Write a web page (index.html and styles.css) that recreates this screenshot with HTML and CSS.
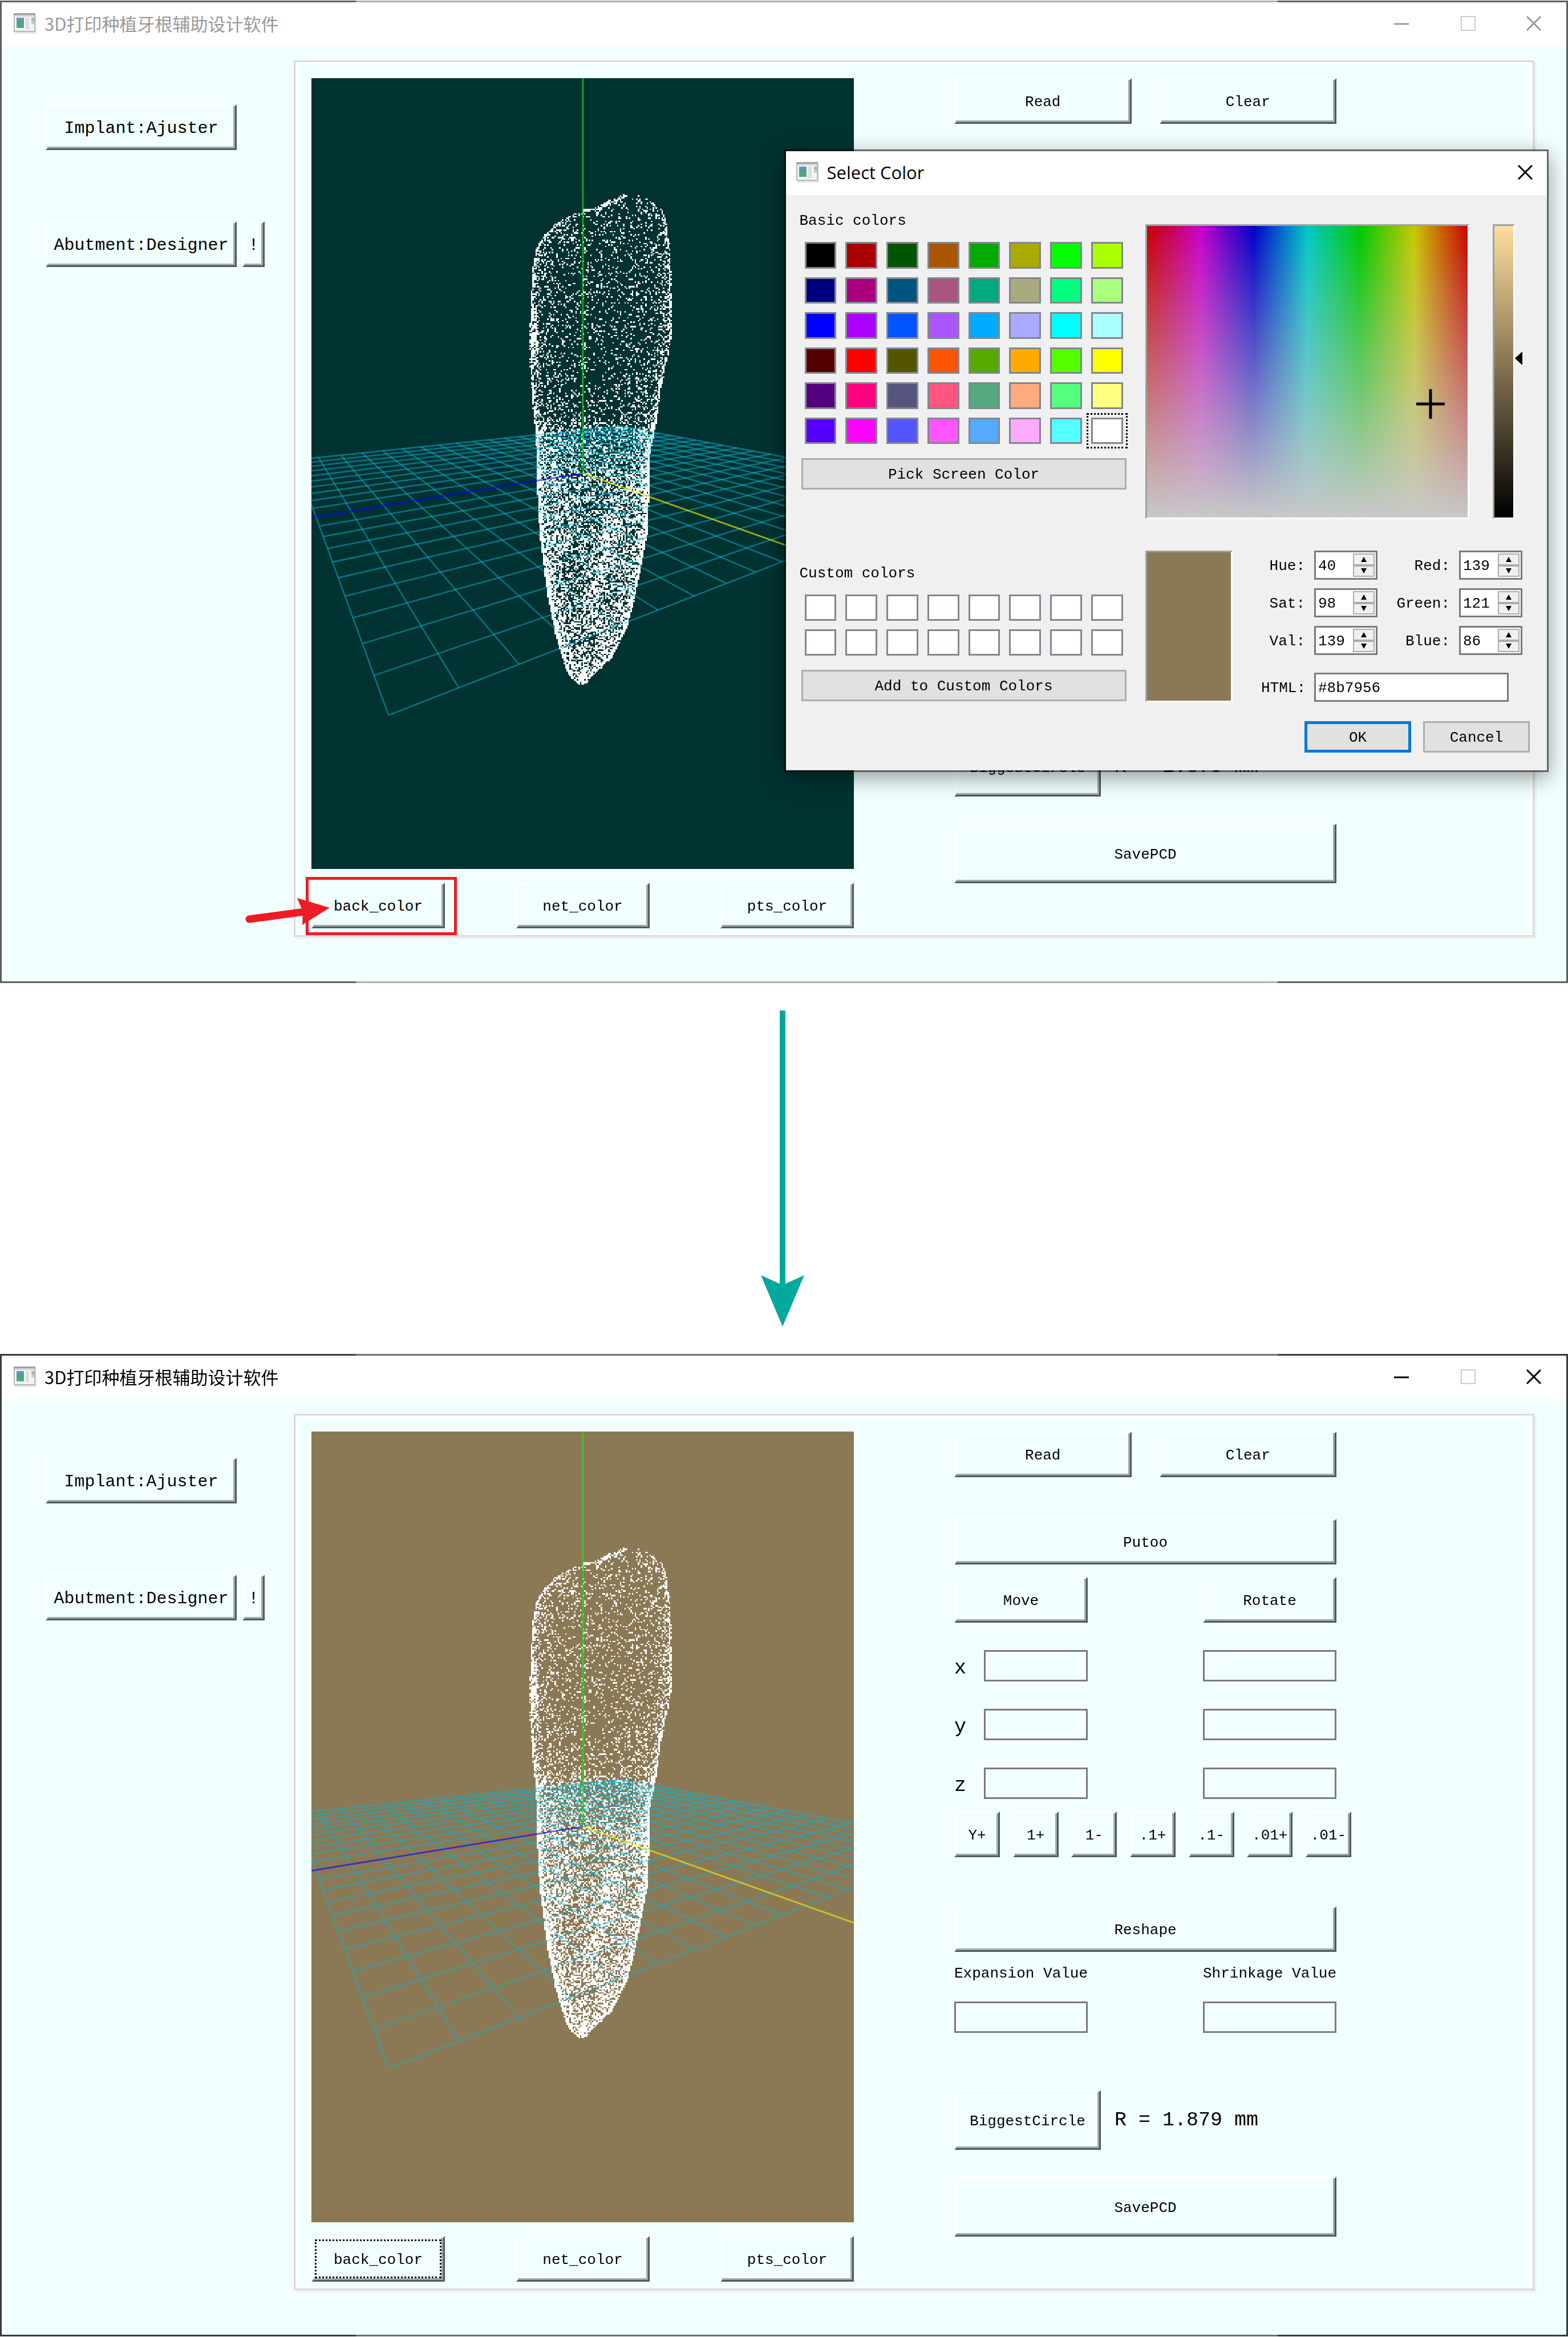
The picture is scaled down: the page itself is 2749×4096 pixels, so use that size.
FILE: index.html
```html
<!DOCTYPE html>
<html lang="zh-CN">
<head>
<meta charset="utf-8">
<title>3D打印种植牙根辅助设计软件</title>
<link rel="stylesheet" href="styles.css">
</head>
<body>
<svg class="defs" aria-hidden="true">
  <symbol id="app-icon" viewBox="0 0 40 36">
    <rect x="2" y="3" width="38" height="33" fill="#e6e6e6"/>
    <rect x="1" y="1" width="36" height="31" fill="#f4f4f4" stroke="#b4b8bc" stroke-width="2"/>
    <rect x="0" y="0" width="38" height="3" fill="#9ea0a4"/>
    <rect x="2" y="3" width="34" height="3" fill="#cdd2da"/>
    <rect x="5" y="8" width="13" height="6" fill="#6b93b8"/>
    <rect x="5" y="13" width="13" height="7" fill="#559c96"/>
    <rect x="5" y="19" width="13" height="7" fill="#50a878"/>
    <rect x="21" y="8" width="6" height="20" fill="#dedede"/>
    <rect x="31" y="8" width="5" height="5" fill="#9db8d0"/>
    <rect x="31" y="13" width="5" height="6" fill="#b4d8b8"/>
  </symbol>
  <symbol id="close" viewBox="0 0 26 26"><path d="M1 1 25 25M25 1 1 25" stroke="currentColor" stroke-width="3"/></symbol>
  <symbol id="maximize" viewBox="0 0 26 26"><rect x="1" y="1" width="24" height="24" fill="none" stroke="currentColor" stroke-width="2"/></symbol>
  <symbol id="minimize" viewBox="0 0 26 26"><path d="M0 14H26" stroke="currentColor" stroke-width="3"/></symbol>
</svg>

<main class="page">
  <section class="window inactive">
    <header class="titlebar">
      <svg class="app-icon"><use href="#app-icon"/></svg>
      <h1 class="title">3D打印种植牙根辅助设计软件</h1>
      <button class="caption" aria-label="Minimize"><svg><use href="#minimize"/></svg></button>
      <button class="caption" aria-label="Maximize" disabled><svg><use href="#maximize"/></svg></button>
      <button class="caption" aria-label="Close"><svg><use href="#close"/></svg></button>
    </header>
    <div class="body">
      <nav class="sidebar">
        <button class="btn nav">Implant:Ajuster</button>
        <div class="nav-row"><button class="btn nav">Abutment:Designer</button><button class="btn nav mark">!</button></div>
      </nav>
      <div class="panel">
        <div class="view">
          <canvas class="scene dark" width="951" height="1386"></canvas>
          <div class="view-buttons">
            <div class="callout">
              <button class="btn">back_color</button>
              <span class="callout-box"></span>
              <svg class="callout-arrow" viewBox="0 0 155 60"><path d="M11 44 108 31" stroke="#ed1c24" stroke-width="13" stroke-linecap="round"/><path d="M152 24 95 7 105 31 104 54Z" fill="#ed1c24"/></svg>
            </div>
            <button class="btn">net_color</button>
            <button class="btn">pts_color</button>
          </div>
        </div>
        <div class="controls">
          <div class="pair"><button class="btn">Read</button><button class="btn">Clear</button></div>
          <button class="btn wide putoo">Putoo</button>
          <div class="row ends"><button class="btn">Move</button><button class="btn">Rotate</button></div>
          <div class="row axis"><label for="ax">x</label><input class="field" id="ax"><input class="field" aria-label="x rotation"></div>
          <div class="row axis"><label for="ay">y</label><input class="field" id="ay"><input class="field" aria-label="y rotation"></div>
          <div class="row axis"><label for="az">z</label><input class="field" id="az"><input class="field" aria-label="z rotation"></div>
          <div class="steps"><button class="btn">Y+</button><button class="btn">1+</button><button class="btn">1-</button><button class="btn">.1+</button><button class="btn">.1-</button><button class="btn">.01+</button><button class="btn">.01-</button></div>
          <button class="btn wide reshape">Reshape</button>
          <div class="row values">
            <div class="value"><label for="ae">Expansion Value</label><input class="field" id="ae"></div>
            <div class="value"><label for="as">Shrinkage Value</label><input class="field" id="as"></div>
          </div>
          <div class="circle"><button class="btn">BiggestCircle</button><output>R = 1.879 mm</output></div>
          <button class="btn wide save">SavePCD</button>
        </div>
      </div>
    </div>
  </section>

  <section class="dialog" role="dialog" aria-label="Select Color">
    <header class="titlebar">
      <svg class="app-icon"><use href="#app-icon"/></svg>
      <h2 class="title">Select Color</h2>
      <button class="caption" aria-label="Close"><svg><use href="#close"/></svg></button>
    </header>
    <div class="dialog-body">
      <div class="palette">
        <h3 class="label">Basic colors</h3>
        <div class="swatches basic">
          <button class="swatch" style="background:#000000"></button><button class="swatch" style="background:#aa0000"></button><button class="swatch" style="background:#005500"></button><button class="swatch" style="background:#aa5500"></button><button class="swatch" style="background:#00aa00"></button><button class="swatch" style="background:#aaaa00"></button><button class="swatch" style="background:#00ff00"></button><button class="swatch" style="background:#aaff00"></button>
          <button class="swatch" style="background:#00007f"></button><button class="swatch" style="background:#aa007f"></button><button class="swatch" style="background:#00557f"></button><button class="swatch" style="background:#aa557f"></button><button class="swatch" style="background:#00aa7f"></button><button class="swatch" style="background:#aaaa7f"></button><button class="swatch" style="background:#00ff7f"></button><button class="swatch" style="background:#aaff7f"></button>
          <button class="swatch" style="background:#0000ff"></button><button class="swatch" style="background:#aa00ff"></button><button class="swatch" style="background:#0055ff"></button><button class="swatch" style="background:#aa55ff"></button><button class="swatch" style="background:#00aaff"></button><button class="swatch" style="background:#aaaaff"></button><button class="swatch" style="background:#00ffff"></button><button class="swatch" style="background:#aaffff"></button>
          <button class="swatch" style="background:#550000"></button><button class="swatch" style="background:#ff0000"></button><button class="swatch" style="background:#555500"></button><button class="swatch" style="background:#ff5500"></button><button class="swatch" style="background:#55aa00"></button><button class="swatch" style="background:#ffaa00"></button><button class="swatch" style="background:#55ff00"></button><button class="swatch" style="background:#ffff00"></button>
          <button class="swatch" style="background:#55007f"></button><button class="swatch" style="background:#ff007f"></button><button class="swatch" style="background:#55557f"></button><button class="swatch" style="background:#ff557f"></button><button class="swatch" style="background:#55aa7f"></button><button class="swatch" style="background:#ffaa7f"></button><button class="swatch" style="background:#55ff7f"></button><button class="swatch" style="background:#ffff7f"></button>
          <button class="swatch" style="background:#5500ff"></button><button class="swatch" style="background:#ff00ff"></button><button class="swatch" style="background:#5555ff"></button><button class="swatch" style="background:#ff55ff"></button><button class="swatch" style="background:#55aaff"></button><button class="swatch" style="background:#ffaaff"></button><button class="swatch" style="background:#55ffff"></button><button class="swatch selected" style="background:#ffffff"></button>
        </div>
        <button class="flat">Pick Screen Color</button>
        <h3 class="label custom">Custom colors</h3>
        <div class="swatches">
          <button class="swatch"></button><button class="swatch"></button><button class="swatch"></button><button class="swatch"></button><button class="swatch"></button><button class="swatch"></button><button class="swatch"></button><button class="swatch"></button>
          <button class="swatch"></button><button class="swatch"></button><button class="swatch"></button><button class="swatch"></button><button class="swatch"></button><button class="swatch"></button><button class="swatch"></button><button class="swatch"></button>
        </div>
        <button class="flat">Add to Custom Colors</button>
      </div>
      <div class="picker">
        <div class="spectrum">
          <div class="hues"><svg class="cross" viewBox="0 0 50 52"><path d="M0 26H50M25 0V52" stroke="#000" stroke-width="5"/></svg></div>
          <div class="luma"><svg class="thumb" viewBox="0 0 13 24"><path d="M0 12 13 0V24Z"/></svg></div>
        </div>
        <div class="numbers">
          <div class="preview"></div>
          <div class="form">
            <label for="hue">Hue:</label><span class="spin"><input type="number" id="hue" value="40"><button class="up" aria-label="Up"></button><button class="down" aria-label="Down"></button></span>
            <label for="red">Red:</label><span class="spin"><input type="number" id="red" value="139"><button class="up" aria-label="Up"></button><button class="down" aria-label="Down"></button></span>
            <label for="sat">Sat:</label><span class="spin"><input type="number" id="sat" value="98"><button class="up" aria-label="Up"></button><button class="down" aria-label="Down"></button></span>
            <label for="green">Green:</label><span class="spin"><input type="number" id="green" value="121"><button class="up" aria-label="Up"></button><button class="down" aria-label="Down"></button></span>
            <label for="val">Val:</label><span class="spin"><input type="number" id="val" value="139"><button class="up" aria-label="Up"></button><button class="down" aria-label="Down"></button></span>
            <label for="blue">Blue:</label><span class="spin"><input type="number" id="blue" value="86"><button class="up" aria-label="Up"></button><button class="down" aria-label="Down"></button></span>
            <label class="last" for="html">HTML:</label><input class="hex last" id="html" value="#8b7956">
          </div>
        </div>
        <div class="actions"><button class="flat primary">OK</button><button class="flat">Cancel</button></div>
      </div>
    </div>
  </section>

  <div class="flow">
    <svg viewBox="0 0 82 554"><path d="M33 0H43V479L76 464 38 554 0 464 33 479Z" fill="#00a99d"/></svg>
  </div>

  <section class="window active">
    <header class="titlebar">
      <svg class="app-icon"><use href="#app-icon"/></svg>
      <h1 class="title">3D打印种植牙根辅助设计软件</h1>
      <button class="caption" aria-label="Minimize"><svg><use href="#minimize"/></svg></button>
      <button class="caption" aria-label="Maximize" disabled><svg><use href="#maximize"/></svg></button>
      <button class="caption" aria-label="Close"><svg><use href="#close"/></svg></button>
    </header>
    <div class="body">
      <nav class="sidebar">
        <button class="btn nav">Implant:Ajuster</button>
        <div class="nav-row"><button class="btn nav">Abutment:Designer</button><button class="btn nav mark">!</button></div>
      </nav>
      <div class="panel">
        <div class="view">
          <canvas class="scene tan" width="951" height="1386"></canvas>
          <div class="view-buttons">
            <button class="btn focused">back_color</button>
            <button class="btn">net_color</button>
            <button class="btn">pts_color</button>
          </div>
        </div>
        <div class="controls">
          <div class="pair"><button class="btn">Read</button><button class="btn">Clear</button></div>
          <button class="btn wide putoo">Putoo</button>
          <div class="row ends"><button class="btn">Move</button><button class="btn">Rotate</button></div>
          <div class="row axis"><label for="bx">x</label><input class="field" id="bx"><input class="field" aria-label="x rotation"></div>
          <div class="row axis"><label for="by">y</label><input class="field" id="by"><input class="field" aria-label="y rotation"></div>
          <div class="row axis"><label for="bz">z</label><input class="field" id="bz"><input class="field" aria-label="z rotation"></div>
          <div class="steps"><button class="btn">Y+</button><button class="btn">1+</button><button class="btn">1-</button><button class="btn">.1+</button><button class="btn">.1-</button><button class="btn">.01+</button><button class="btn">.01-</button></div>
          <button class="btn wide reshape">Reshape</button>
          <div class="row values">
            <div class="value"><label for="be">Expansion Value</label><input class="field" id="be"></div>
            <div class="value"><label for="bs">Shrinkage Value</label><input class="field" id="bs"></div>
          </div>
          <div class="circle"><button class="btn">BiggestCircle</button><output>R = 1.879 mm</output></div>
          <button class="btn wide save">SavePCD</button>
        </div>
      </div>
    </div>
  </section>
</main>
<script src="scene.js"></script>
</body>
</html>
```
FILE: styles.css
```css
* { box-sizing: border-box; }

body {
  margin: 0;
  background: #fff;
  color: #000;
  font: 26px/32px "Liberation Mono", "Noto Sans CJK SC", monospace;
}

button, input { font: inherit; color: inherit; border-radius: 0; margin: 0; padding: 0; }
.defs { display: none; }

.page {
  position: relative;
  display: flex;
  flex-direction: column;
  padding: 1px 0 2px 0;
}

/* main windows */
.window { border: 3px solid; background: #f2ffff; }
.inactive { border-image: linear-gradient(to right, #5b605e 22.7%, #a9b0ad 22.7% 81.5%, #5b605e 81.5%) 3; }
.active { border-image: linear-gradient(to right, #3b3b3b 22.7%, #6f6f6f 22.7% 81.5%, #3b3b3b 81.5%) 3; }

.titlebar {
  display: flex;
  align-items: center;
  height: 77px;
  padding: 0 0 4px 21px;
  background: #fff;
}
.app-icon { width: 40px; height: 36px; margin-right: 14px; }
.title {
  flex: 1;
  margin: 0;
  font: 31px/40px "Noto Sans CJK SC", sans-serif;
}
.inactive .title, .inactive .caption { color: #999; }
.caption {
  width: 117px;
  height: 72px;
  border: 0;
  background: none;
  display: flex;
  align-items: center;
  justify-content: center;
}
.caption:last-child { width: 114px; }
.caption svg { width: 26px; height: 26px; }
.caption:disabled, .inactive .caption:disabled { color: #ccc; }

.body { display: grid; grid-template-columns: 512px 1fr; padding: 25px 56px 78px 0; }
.sidebar { padding: 77px 0 0 77px; display: flex; flex-direction: column; gap: 125px; }
.nav-row { display: flex; gap: 10px; }

.btn {
  height: 80px;
  padding-top: 4px;
  border: 3px solid;
  border-color: #fff #535959 #535959 #fff;
  box-shadow: inset -3px -3px 0 #a0aaaa;
  background: #f2ffff;
  white-space: nowrap;
  text-align: center;
}
.nav { width: 335px; font-size: 30px; }
.mark { width: 39px; }
.focused { outline: 3px dotted #000; outline-offset: -9px; }

.panel {
  display: grid;
  grid-template-columns: 951fr 670fr;
  column-gap: 176px;
  padding: 28px 344px 12px 28px;
  border: 3px solid #d9d9d9;
  box-shadow: inset 0 0 0 3px #fff, 4px 4px 0 #f0f0f0;
}
.scene { display: block; width: 100%; height: auto; }
.dark { background: #003232; }
.tan { background: #8b7956; }
.view-buttons { display: flex; justify-content: space-between; margin-top: 24px; }
.view-buttons .btn { width: 234px; }

/* red pointer around the first button */
.callout { position: relative; }
.callout-box { position: absolute; inset: -10px -21px -12px -10px; border: 5px solid #ed1c24; pointer-events: none; }
.callout-arrow { position: absolute; left: -120px; top: 20px; width: 155px; height: 60px; pointer-events: none; }

.controls { display: flex; flex-direction: column; }
.pair { display: grid; grid-template-columns: 1fr 1fr; gap: 49px; }
.putoo { margin-top: 73px; }
.ends { margin-top: 22px; }
.row { display: flex; justify-content: space-between; }
.ends .btn { width: 234px; }
.axis { margin-top: 48px; font-size: 35px; }
.axis label { width: 52px; line-height: 64px; height: 55px; }
.field {
  width: 234px;
  height: 55px;
  border: 3px solid #7a7a7a;
  box-shadow: inset 0 0 0 2px #fff;
  background: #f2ffff;
}
.axis label + .field { width: 182px; margin-right: auto; }
.steps { display: flex; justify-content: space-between; margin: 22px -26px 0 0; }
.steps .btn { width: 80px; }
.reshape { margin-top: 86px; }
.values { margin-top: 22px; }
.value { display: flex; flex-direction: column; gap: 33px; width: 234px; white-space: nowrap; }
.circle { display: flex; align-items: center; gap: 24px; margin-top: 100px; font-size: 35px; }
.circle .btn { width: 257px; height: 105px; font-size: 26px; }
.save { margin-top: 47px; height: 105px; }

/* colour dialog */
.dialog {
  position: absolute;
  left: 50%;
  right: 34px;
  top: 262px;
  border: 3px solid rgba(0, 0, 0, .58);
  background: #f0f0f0;
  background-clip: padding-box;
  box-shadow: 0 10px 36px rgba(0, 0, 0, .4);
}
.dialog .titlebar { padding-left: 18px; }
.dialog .title { font-family: "Open Sans", sans-serif; }
.dialog .caption { width: 76px; }
.dialog-body { display: grid; grid-template-columns: 573px 1fr; column-gap: 33px; padding: 27px 30px 31px 24px; }
.palette { display: flex; flex-direction: column; }
.label { margin: 0; padding-top: 2px; height: 32px; font: inherit; }
.custom { margin-top: 129px; }
.swatches { display: grid; grid-template-columns: repeat(8, 1fr); grid-auto-rows: 46px; gap: 15px 16px; padding: 0 6px 0 9px; margin: 23px 0 25px; }
.basic { height: 354px; grid-auto-rows: 1fr; }
.swatch { border: 3px solid #82868f; background: #fff; }
.selected { outline: 3px dotted #000; outline-offset: 5px; }
.flat { height: 55px; padding-top: 3px; border: 3px solid #adadad; background: #e1e1e1; }
.palette .flat { margin-left: 3px; }

.picker { display: flex; flex-direction: column; padding-top: 24px; }
.spectrum { display: flex; gap: 41px; padding-right: 26px; height: 517px; }
.hues, .luma { position: relative; border: 3px solid; border-color: #a0a0a0 #fff #fff #a0a0a0; }
.hues {
  flex: 1;
  background:
    linear-gradient(rgba(200, 200, 200, 0), #c8c8c8),
    linear-gradient(to right, #c80000, #c800c8, #0000c8, #00c8c8, #00c800, #c8c800, #c80000);
}
.cross { position: absolute; left: 84%; top: 56%; width: 50px; height: 52px; }
.luma { width: 39px; background: linear-gradient(#ffde9e, #000); }
.thumb { position: absolute; left: 36px; top: 220px; width: 13px; height: 24px; }
.numbers { display: flex; justify-content: space-between; margin-top: 55px; padding-right: 13px; }
.preview { width: 153px; height: 266px; border: 3px solid; border-color: #a0a0a0 #fff #fff #a0a0a0; background: #8b7956; }
.form {
  display: grid;
  grid-template-columns: 77px 111px 111px 111px;
  grid-auto-rows: 51px;
  gap: 15px 16px;
  line-height: 54px;
}
.form label { text-align: right; white-space: nowrap; }
.spin { display: grid; grid-template-columns: 1fr 38px; grid-template-rows: 1fr 1fr; padding: 2px 2px 2px 4px; border: 3px solid #7a7a7a; background: #fff; }
.spin input { grid-row: span 2; width: 100%; min-width: 0; padding-top: 2px; border: 0; background: none; appearance: textfield; }
.spin input::-webkit-inner-spin-button { appearance: none; margin: 0; }
.up, .down { border: 2px solid #acacac; background: #f0f0f0; display: flex; align-items: center; justify-content: center; }
.up::before, .down::before { content: ""; border: 5px solid transparent; }
.up::before { border-top-width: 0; border-bottom: 9px solid #000; }
.down::before { border-bottom-width: 0; border-top: 9px solid #000; }
.form .last { margin-top: 16px; height: 51px; }
.hex { grid-column: span 3; margin-right: 24px; padding: 2px 0 0 4px; min-width: 0; border: 3px solid #7a7a7a; background: #fff; }
.actions { display: flex; justify-content: flex-end; gap: 21px; margin-top: 33px; }
.actions .flat { width: 187px; }
.actions .primary { padding-top: 2px; border: 5px solid #0078d7; }

.flow { display: flex; justify-content: center; padding: 48px 0; }
.flow svg { width: 82px; height: 554px; }
```
FILE: scene.js
```js
// Tooth silhouette: [y, left x, right x]
const OUTLINE = [
  [204, 547, 561], [209, 530, 588], [218, 513, 598], [227, 495, 610], [231, 475, 614],
  [241, 452, 618], [252, 431, 620], [265, 418, 622], [279, 404, 624], [299, 393, 627],
  [333, 387, 628], [388, 384, 629], [456, 383, 629], [496, 383, 620], [524, 384, 615],
  [558, 387, 608], [605, 391, 602], [660, 395, 591], [728, 396, 590], [796, 400, 587],
  [830, 404, 580], [898, 413, 567], [932, 419, 559], [959, 425, 552], [979, 429, 542],
  [1013, 440, 525], [1034, 446, 503], [1047, 452, 489], [1060, 466, 479]
];
const PX = 2.6;

function rng(seed) {
  return () => {
    seed = (seed * 1664525 + 1013904223) >>> 0;
    return seed / 4294967296;
  };
}

function span(y) {
  for (let i = 1; i < OUTLINE.length; i++) {
    const a = OUTLINE[i - 1], b = OUTLINE[i];
    if (y <= b[0]) {
      const k = (y - a[0]) / (b[0] - a[0]);
      return [a[1] + k * (b[1] - a[1]), a[2] + k * (b[2] - a[2])];
    }
  }
  return [470, 475];
}

// Ground plane (s, t in -1..1) to canvas
function ground(s, t) {
  const w = 1 - 0.2674 * s - 0.40684 * t;
  const x = (-735.4 * s + 24.24 * t + 805) / w;
  const y = (-18.2 * s - 31.56 * t + 375) / w;
  return [x * 0.6593 - 54.8, y * 0.6802 + 437.3];
}

function draw(canvas) {
  const c = canvas.getContext('2d');
  const rand = rng(7);
  const line = (a, b, color, width) => {
    c.strokeStyle = color;
    c.lineWidth = width;
    c.beginPath();
    c.moveTo(a[0], a[1]);
    c.lineTo(b[0], b[1]);
    c.stroke();
  };

  c.fillStyle = '#fff';
  // one point covers one whole cell of the PX raster
  const dot = (x, y) => {
    const i = Math.round(x / PX), j = Math.round(y / PX);
    const l = Math.round(i * PX), t = Math.round(j * PX);
    c.fillRect(l, t, Math.round((i + 1) * PX) - l, Math.round((j + 1) * PX) - t);
  };
  let placed = 0;
  while (placed < 9600) {
    const y = 204 + rand() * 856;
    const weight = y < 560 ? 0.28 : y < 700 ? 0.28 + (y - 560) / 270 : 0.8;
    if (rand() > weight) continue;
    const [l, r] = span(y);
    if (rand() > (r - l) / 246 + 0.1) continue;
    const s = Math.sin((rand() - 0.5) * Math.PI);
    dot((l + r) / 2 + s * (r - l) / 2, y);
    placed++;
  }
  // rim
  for (let y = 204; y < 1060; y += 2) {
    const [l, r] = span(y);
    if (rand() < 0.75) dot(l + rand() * 4, y);
    if (rand() < 0.6) dot(r - rand() * 4, y);
  }
  for (let x = 475; x < 548; x += 2) {
    dot(x, x < 495 ? 229 : 229 - (x - 495) * 0.46 + rand() * 3);
  }
  // denser patches
  const patch = (x0, y0, x1, y1, spread, n) => {
    for (let i = 0; i < n; i++) {
      const k = rand();
      const g = () => (rand() + rand() + rand() - 1.5) * spread;
      dot(x0 + (x1 - x0) * k + g(), y0 + (y1 - y0) * k + g());
    }
  };
  patch(530, 765, 500, 880, 20, 330);
  patch(500, 880, 490, 945, 16, 130);
  patch(390, 405, 390, 500, 5, 150);
  patch(472, 1045, 472, 1055, 7, 90);
  patch(424, 670, 432, 720, 14, 60);

  for (let i = -10; i <= 10; i++) {
    if (i !== 0) {
      line(ground(i / 10, -1), ground(i / 10, 1), 'rgba(10,180,210,.5)', 2.6);
      line(ground(-1, i / 10), ground(1, i / 10), 'rgba(10,180,210,.5)', 2.6);
    }
  }
  line(ground(0, -1), ground(0, 0), 'rgba(10,180,210,.5)', 2.6);
  line(ground(-1, 0), ground(0, 0), 'rgba(10,180,210,.5)', 2.6);

  // points in front of the ground plane
  placed = 0;
  while (placed < 2600) {
    const y = 600 + rand() * 440;
    const [l, r] = span(y);
    const s = Math.sin((rand() - 0.5) * Math.PI);
    dot((l + r) / 2 + s * (r - l) / 2, y);
    placed++;
  }

  const origin = ground(0, 0);
  line(origin, ground(1.2, 0), 'rgba(0,0,255,.6)', 3);
  line(origin, ground(0, 1.2), 'rgba(240,235,0,.65)', 3);
  line(origin, [origin[0], 0], 'rgba(20,235,10,.7)', 2.6);
}

document.querySelectorAll('.scene').forEach(draw);
```
